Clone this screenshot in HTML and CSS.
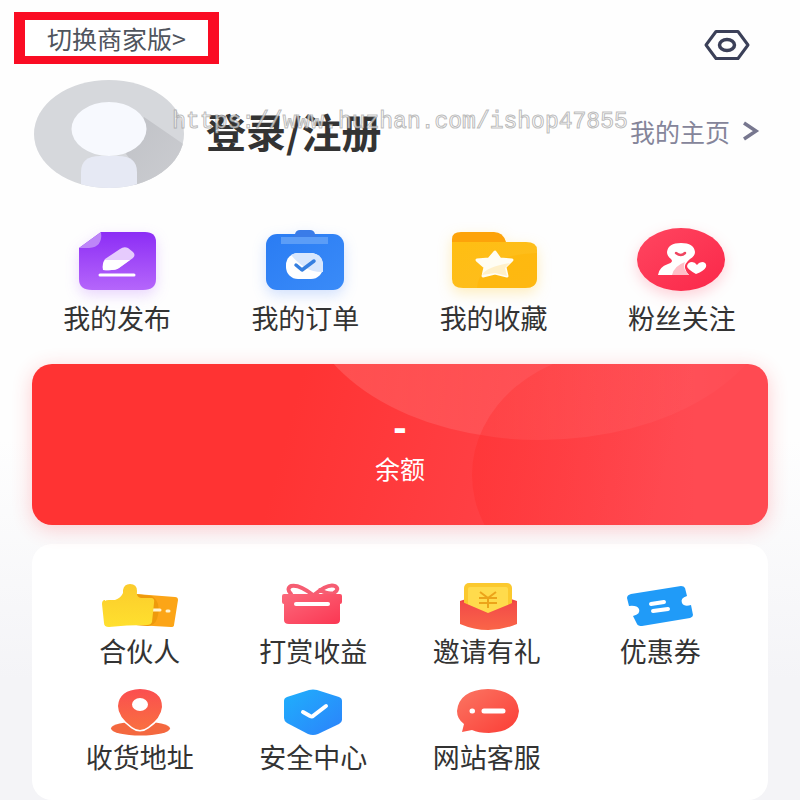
FILE: index.html
```
<!DOCTYPE html>
<html lang="zh-CN">
<head>
    <meta charset="UTF-8">
    <meta name="viewport" content="width=device-width, initial-scale=1.0">
    <title>我的</title>
    <link rel="stylesheet" href="styles.css">
</head>
<body>

<header class="topbar">
    <a class="switch" href="#">切换商家版&gt;</a>
    <button class="settings" type="button" aria-label="设置">
        <svg width="46" height="32" viewBox="0 0 46 32" fill="none" stroke="#3b4058" stroke-linejoin="round">
            <path d="M12 2.500H34L44 16L34 29.500H12L2 16Z" stroke-width="3"/>
            <ellipse cx="23" cy="16" rx="7.500" ry="5.500" stroke-width="3.500"/>
        </svg>
    </button>
</header>

<!-- 用户信息 -->
<section class="profile">
    <svg class="avatar" width="150" height="108" viewBox="0 0 150 108">
        <defs>
            <clipPath id="face"><ellipse cx="75" cy="54" rx="75" ry="54"/></clipPath>
            <linearGradient id="faceShade" x1="0" y1="0" x2="1" y2="1">
                <stop offset="0" stop-color="#c0c2c7"/><stop offset="1" stop-color="#cccdd1"/>
            </linearGradient>
        </defs>
        <g clip-path="url(#face)">
            <rect width="150" height="108" fill="#d6d8dc"/>
            <path d="M110 37L152 66V108H100V84L92 74Z" fill="url(#faceShade)"/>
            <path d="M47 110V92Q47 76 66 76H84Q103 76 103 92V110Z" fill="#e6e9f4"/>
            <ellipse cx="75" cy="49" rx="37.500" ry="27" fill="#f7f9fe"/>
        </g>
    </svg>
    <a class="login" href="#">登录/注册</a>
    <a class="home-link" href="#">我的主页
        <svg width="18" height="20" viewBox="0 0 18 20" fill="none" stroke="#77778f" stroke-width="3.500">
            <path d="M2 2L14 10L2 18"/>
        </svg>
    </a>
    <span class="watermark">https://www.huzhan.com/ishop47855</span>
</section>

<nav class="menu">
    <a class="menu-item purple" href="#">
        <svg width="96" height="64" viewBox="0 0 96 64">
            <defs>
                <linearGradient id="gPurple" x1="0" y1="0" x2="0" y2="1">
                    <stop offset="0" stop-color="#8c2df5"/><stop offset="1" stop-color="#b566fb"/>
                </linearGradient>
            </defs>
            <path d="M32 4H76Q87 4 87 14V51Q87 62 74 62H23Q10 62 10 51V20Z" fill="url(#gPurple)"/>
            <path d="M10 20L32 4Q34 19 20 20Z" fill="#bd86f8"/>
            <path d="M34 42Q33 35 36 31L51 21Q55 18 59 20L64 24Q67 27 64 30L50 40Q46 43 34 42Z" fill="#e6cbfd"/>
            <path d="M34 42Q33 35 36 32H61L50 40Q46 43 34 42Z" fill="#fff"/>
            <path d="M31 47H65" stroke="#fff" stroke-width="3" stroke-linecap="round"/>
        </svg>
        <span>我的发布</span>
    </a>
    <a class="menu-item blue" href="#">
        <svg width="96" height="64" viewBox="0 0 96 64">
            <defs>
                <linearGradient id="gBlue" x1="0" y1="0" x2="1" y2="1">
                    <stop offset="0" stop-color="#2a7cf3"/><stop offset="1" stop-color="#3a8bf8"/>
                </linearGradient>
            </defs>
            <rect x="9" y="6" width="78" height="56" rx="11" fill="url(#gBlue)"/>
            <path d="M24 9H71V16H24Z" fill="#5b9df7"/>
            <path d="M31 9Q38 9 38 6Q39 2 43 2H53Q57 2 58 6Q58 9 65 9Z" fill="#3a7ce8"/>
            <rect x="29" y="25" width="37" height="26" rx="12" fill="#fff"/>
            <path d="M34 27Q37 25 41 25H54Q66 26 66 38V44Q49 45 34 27Z" fill="#d8e7fd"/>
            <path d="M39 37L45 42L57 33" fill="none" stroke="#357fe0" stroke-width="3.500" stroke-linecap="round" stroke-linejoin="round"/>
        </svg>
        <span>我的订单</span>
    </a>
    <a class="menu-item yellow" href="#">
        <svg width="96" height="64" viewBox="0 0 96 64">
            <defs>
                <linearGradient id="gYellow" x1="0" y1="0" x2="1" y2="1">
                    <stop offset="0" stop-color="#ffbe12"/><stop offset="1" stop-color="#fdbd20"/>
                </linearGradient>
            </defs>
            <path d="M6 18V11Q6 4 15 4H48Q57 4 60 14V20H6Z" fill="#fda30a"/>
            <path d="M6 14H80Q91 14 91 22V50Q91 60 79 60H17Q6 60 6 51Z" fill="url(#gYellow)"/>
            <path d="M31 60Q32 45 47 36Q62 26 91 25V50Q91 60 79 60Z" fill="#ffb100" opacity=".4"/>
            <path d="M49 24L54 31L66 32L59 39L61 48L49 45L37 48L39 39L31 32L43 31Z" fill="#fffdf3" stroke="#fffdf3" stroke-width="3" stroke-linejoin="round"/>
            <path d="M36 47Q40 39 64 35L59 40L61 48L49 45Z" fill="#fff0c9"/>
        </svg>
        <span>我的收藏</span>
    </a>
    <a class="menu-item red" href="#">
        <svg width="96" height="64" viewBox="0 0 96 64">
            <defs>
                <linearGradient id="gRed" x1="0" y1="0" x2="1" y2="1">
                    <stop offset="0" stop-color="#ff4660"/><stop offset="1" stop-color="#fb2749"/>
                </linearGradient>
            </defs>
            <ellipse cx="47" cy="31.500" rx="44" ry="31.500" fill="url(#gRed)"/>
            <path d="M24 47Q25 39 34 36Q40 34 37 31Q33 28 33 24Q34 15 47 15Q60 15 61 24Q61 28 56 31Q50 36 51 40Q52 44 55 47Z" fill="#fff"/>
            <path d="M38 47Q40 38 51 34Q49 38 51 42L55 47Z" fill="#ffbfc8"/>
            <path d="M42 25Q47 29 51 25" fill="none" stroke="#ef4560" stroke-width="2.500" stroke-linecap="round"/>
            <path d="M62 46Q53 41 53 38Q54 34 58 34Q61 34 63 37Q65 34 69 34Q73 35 72 39Q70 43 62 46Z" fill="#fff"/>
        </svg>
        <span>粉丝关注</span>
    </a>
</nav>

<!-- 余额 -->
<section class="balance">
    <svg class="balance-bg" viewBox="0 0 736 161" preserveAspectRatio="none" aria-hidden="true">
        <defs>
            <linearGradient id="light" x1="0" y1="0" x2="1" y2="0">
                <stop offset="0" stop-color="#fff" stop-opacity=".14"/>
                <stop offset=".6" stop-color="#fff" stop-opacity=".07"/>
                <stop offset="1" stop-color="#fff" stop-opacity="0"/>
            </linearGradient>
            <linearGradient id="dark" x1="0" y1="0" x2="1" y2="0">
                <stop offset="0" stop-color="#ff2a2a" stop-opacity=".36"/>
                <stop offset=".75" stop-color="#ff2a2a" stop-opacity="0"/>
            </linearGradient>
        </defs>
        <ellipse cx="508" cy="-74" rx="237" ry="150" fill="url(#light)"/>
        <ellipse cx="590" cy="111" rx="150" ry="125" fill="url(#dark)"/>
    </svg>
    <strong class="amount">-</strong>
    <span class="amount-label">余额</span>
</section>

<nav class="tools">
    <a class="tool" href="#">
        <svg width="88" height="48" viewBox="0 0 88 48">
            <defs>
                <linearGradient id="gThumb" x1="0" y1="0" x2="0" y2="1">
                    <stop offset="0" stop-color="#fbcb2c"/><stop offset="1" stop-color="#ffe02e"/>
                </linearGradient>
            </defs>
            <path d="M40 11L79 14Q82 14 82 17L78 42Q78 44 75 44L40 42Z" fill="#fca517"/>
            <path d="M40 11L56 13Q66 20 61 36Q59 42 52 43L40 42Z" fill="#ee9a0c"/>
            <path d="M57 27H64M71 28H73" stroke="#fff3cf" stroke-width="3" stroke-linecap="round"/>
            <path d="M9 18Q10 17 13 17H19Q25 15 27 10V7Q28 1 34 1Q41 1 41 8Q40 14 45 15H55Q59 15 58 20L56 39Q55 42 51 42Q30 42 13 44Q8 44 8 40L6 21Q6 17 9 17Z" fill="url(#gThumb)"/>
        </svg>
        <span>合伙人</span>
    </a>
    <a class="tool" href="#">
        <svg width="88" height="48" viewBox="0 0 88 48">
            <defs>
                <linearGradient id="gGift" x1="0" y1="0" x2="1" y2="1">
                    <stop offset="0" stop-color="#fb6a7c"/><stop offset="1" stop-color="#fb3652"/>
                </linearGradient>
            </defs>
            <path d="M44 12Q30 1 22 3Q17 6 22 11M45 12Q59 0 66 3Q71 6 65 10Q60 12 51 7" fill="none" stroke="#f65d72" stroke-width="4" stroke-linecap="round"/>
            <path d="M15 11H71Q73 11 73 13V19Q73 21 71 21V37Q71 41 66 41H20Q15 41 15 37V21Q13 21 13 19V13Q13 11 15 11Z" fill="url(#gGift)"/>
            <path d="M27 21H59" stroke="#fff" stroke-width="4" stroke-linecap="round"/>
        </svg>
        <span>打赏收益</span>
    </a>
    <a class="tool" href="#">
        <svg width="88" height="48" viewBox="0 0 88 48">
            <defs>
                <linearGradient id="gEnvelope" x1="0" y1="0" x2="0" y2="1">
                    <stop offset="0" stop-color="#f24a48"/><stop offset="1" stop-color="#fa6548"/>
                </linearGradient>
            </defs>
            <path d="M17 18L23 16H68L74 18V36H17Z" fill="#ee4644"/>
            <rect x="21" y="0" width="48" height="36" rx="5" fill="#fbc92e"/>
            <rect x="25" y="4" width="40" height="30" rx="2" fill="#ffdb4c"/>
            <path d="M37 9L45 15L53 9M45 15V25M36 15H54M36 20H54" fill="none" stroke="#eca41a" stroke-width="2"/>
            <path d="M17 18L45 30L74 18V41Q45 53 17 41Z" fill="url(#gEnvelope)"/>
        </svg>
        <span>邀请有礼</span>
    </a>
    <a class="tool" href="#">
        <svg width="88" height="48" viewBox="0 0 88 48">
            <path d="M15 11L65 3Q68 3 69 5L71 13Q64 15 66 20Q68 24 75 22L77 32Q77 34 74 35L26 43Q22 43 21 41L17 33Q25 31 23 26Q21 22 13 23L11 15Q11 12 15 11Z" fill="#209bf8"/>
            <path d="M35 21L48 19M37 28L52 26" stroke="#fff" stroke-width="4" stroke-linecap="round"/>
        </svg>
        <span>优惠券</span>
    </a>
    <a class="tool" href="#">
        <svg width="88" height="48" viewBox="0 0 88 48">
            <defs>
                <linearGradient id="gPin" x1="0" y1="0" x2="0" y2="1">
                    <stop offset="0" stop-color="#fb4e50"/><stop offset="1" stop-color="#f97040"/>
                </linearGradient>
            </defs>
            <ellipse cx="44.500" cy="39.500" rx="29.500" ry="7" fill="#f4683f"/>
            <path d="M44 0Q66 1 66 18Q65 29 52 38Q44 44 36 38Q22 28 22 17Q23 1 44 0Z" fill="url(#gPin)" stroke="#fff" stroke-width="3" paint-order="stroke"/>
            <ellipse cx="44" cy="15.500" rx="8" ry="6.500" fill="#fff"/>
        </svg>
        <span>收货地址</span>
    </a>
    <a class="tool" href="#">
        <svg width="88" height="48" viewBox="0 0 88 48">
            <defs>
                <linearGradient id="gShield" x1="0" y1="0" x2="1" y2="1">
                    <stop offset="0" stop-color="#1fb0fc"/><stop offset="1" stop-color="#2c82fb"/>
                </linearGradient>
            </defs>
            <path d="M40 1Q44 0 48 1L70 8Q73 9 73 12V31Q73 33 70 35L49 45Q44 47 39 45L18 34Q15 32 15 29V12Q15 9 18 8Z" fill="url(#gShield)"/>
            <path d="M34 23L41 27Q43 28 44 27L57 17" fill="none" stroke="#fff" stroke-width="4" stroke-linecap="round"/>
        </svg>
        <span>安全中心</span>
    </a>
    <a class="tool" href="#">
        <svg width="88" height="48" viewBox="0 0 88 48">
            <defs>
                <linearGradient id="gChat" x1="0" y1="0" x2="1" y2="1">
                    <stop offset="0" stop-color="#fb7663"/><stop offset="1" stop-color="#fb3d36"/>
                </linearGradient>
            </defs>
            <path d="M45 0Q74 1 76 22Q74 43 46 44Q35 44 29 41L19 43L21 35Q14 30 14 22Q16 1 45 0Z" fill="url(#gChat)"/>
            <path d="M29 22H29.500M41 22H60" stroke="#fff" stroke-width="5" stroke-linecap="round"/>
        </svg>
        <span>网站客服</span>
    </a>
</nav>

</body>
</html>
```
FILE: styles.css
```
* {
    box-sizing: border-box;
}

html {
    min-height: 100%;
    background: linear-gradient(#fefefe 0%, #fefefe 55%, #f4f4f7 85%);
}

body {
    margin: 0;
    font-family: "Noto Sans CJK SC", "Noto Sans", sans-serif;
    color: #333;
}

a {
    color: inherit;
    text-decoration: none;
}

svg {
    display: block;
    overflow: visible;
}

.topbar {
    display: flex;
    align-items: center;
    justify-content: space-between;
    padding: 12px 50px 0 14px;
}

.switch {
    padding: 0 22px;
    border: solid #fa0c23;
    border-width: 8px 11px;
    background: #fff;
    font-size: 25px;
    line-height: 36px;
    color: #4f545d;
}

.settings {
    padding: 2px 0 0;
    border: none;
    background: none;
    cursor: pointer;
}

.topbar .settings {
    margin-top: 12px;
}

.profile {
    position: relative;
    display: flex;
    align-items: center;
    padding: 16px 40px 0 34px;
}

.login,
.home-link {
    padding-bottom: 6px;
    line-height: 48px;
}

.login {
    margin-left: 22px;
    font-size: 40px;
    font-weight: bold;
}

.home-link {
    display: flex;
    align-items: center;
    gap: 12px;
    margin-left: auto;
    font-size: 25px;
    color: #85859a;
}

/* 水印浮在用户信息上面 */
.watermark {
    position: absolute;
    top: 42px;
    left: 50%;
    transform: translateX(-50%);
    font-family: "Liberation Mono", monospace;
    font-size: 23px;
    line-height: 32px;
    color: rgba(255, 255, 255, 0.7);
    -webkit-text-stroke: 1px rgba(130, 130, 130, 0.55);
    pointer-events: none;
}

.menu {
    display: grid;
    grid-template-columns: repeat(4, 1fr);
    padding: 40px 24px 0 23px;
}

.menu-item,
.tool {
    display: flex;
    flex-direction: column;
    align-items: center;
    font-size: 27px;
}

.menu-item {
    gap: 8px;
    line-height: 36px;
}

.purple svg { filter: drop-shadow(0 5px 7px rgba(160, 70, 250, 0.22)); }
.blue svg { filter: drop-shadow(0 5px 7px rgba(50, 120, 250, 0.22)); }
.yellow svg { filter: drop-shadow(0 5px 7px rgba(255, 200, 40, 0.3)); }
.red svg { filter: drop-shadow(0 5px 7px rgba(255, 50, 80, 0.22)); }

.balance {
    position: relative;
    display: flex;
    flex-direction: column;
    align-items: center;
    margin: 28px 32px 0;
    padding: 40px 0 39px;
    border-radius: 20px;
    background: linear-gradient(105deg, #ff3333 35%, #ff4a52 85%);
    box-shadow: 0 4px 20px rgba(255, 50, 60, 0.24);
    overflow: hidden;
    color: #fff;
}

.balance-bg {
    position: absolute;
    inset: 0;
    width: 100%;
    height: 100%;
}

.amount {
    position: relative;
    font-family: "Liberation Sans", sans-serif;
    font-size: 40px;
    line-height: 46px;
}

.amount-label {
    position: relative;
    font-size: 25px;
    line-height: 36px;
}

.tools {
    display: grid;
    grid-template-columns: repeat(4, 1fr);
    row-gap: 20px;
    margin: 19px 32px 0;
    padding: 39px 21px 25px;
    border-radius: 20px;
    background: #fff;
}

.tool {
    gap: 2px;
    line-height: 36px;
}
```
